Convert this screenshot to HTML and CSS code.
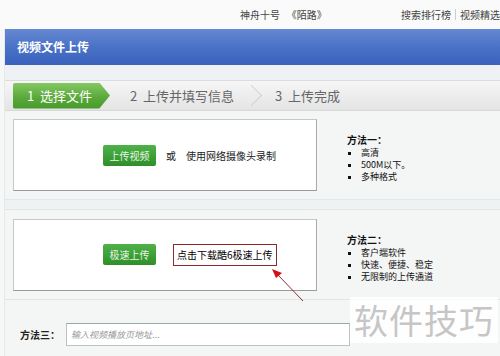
FILE: index.html
```html
<!DOCTYPE html>
<html lang="zh-CN">
<head>
  <meta charset="UTF-8" />
  <title>视频文件上传</title>
  <link rel="stylesheet" href="styles.css">
</head>
<body>
  <div class="topbar">
    <span class="news">神舟十号&nbsp;&nbsp;&nbsp;《陌路》</span>
    <span class="links">搜索排行榜<i class="sep"></i>视频精选</span>
  </div>

  <div class="page">
    <div class="head">视频文件上传</div>
    <div class="strip"></div>

    <div class="steps">
      <div class="step active">1&nbsp;&nbsp;选择文件</div>
      <div class="step">2&nbsp;&nbsp;上传并填写信息</div>
      <div class="chev"></div>
      <div class="step">3&nbsp;&nbsp;上传完成</div>
    </div>

    <div class="section first">
      <div class="box">
        <span class="btn">上传视频</span>
        <span class="or">或</span>
        <span>使用网络摄像头录制</span>
      </div>
      <div class="info">
        <b>方法一：</b>
        <ul>
          <li>高清</li>
          <li>500M以下。</li>
          <li>多种格式</li>
        </ul>
      </div>
    </div>

    <div class="band"></div>

    <div class="section second">
      <div class="box">
        <span class="btn">极速上传</span>
        <span class="tip">点击下载酷6极速上传</span>
        <svg class="arrow" width="40" height="36" viewBox="0 0 40 36">
          <line x1="33" y1="34" x2="7" y2="7" stroke="#8a3030" stroke-width="1"/>
          <polygon points="2,2 12,6 6,11" fill="#d0101a"/>
        </svg>
      </div>
      <div class="info">
        <b>方法二：</b>
        <ul>
          <li>客户端软件</li>
          <li>快速、便捷、稳定</li>
          <li>无限制的上传通道</li>
        </ul>
      </div>
    </div>

    <div class="section third">
      <b>方法三：</b>
      <input class="url" type="text" placeholder="输入视频播放页地址..." />
    </div>
  </div>

  <div class="mark">软件技巧</div>
</body>
</html>
```

FILE: styles.css
```css
body {
  margin: 0;
  background-color: #f6f7f7;
  font-family: "Noto Sans CJK SC", "DejaVu Sans", sans-serif;
  font-size: 11px;
  color: #222;
  width: 500px;
  height: 356px;
  overflow: hidden;
  position: relative;
}
.topbar {
  height: 29px;
  background-color: #fafafa;
  display: flex;
  align-items: center;
  color: #444;
  font-size: 10px;
  white-space: nowrap;
}
.topbar .news {
  margin-left: 240px;
  width: 168px;
}
.topbar .links {
  display: flex;
  align-items: center;
}
.topbar .sep {
  display: inline-block;
  width: 1px;
  height: 11px;
  background-color: #ccc;
  margin: 0 4px;
}
.page {
  margin-left: 4px;
  background-color: #f4f5f5;
  border-left: 1px solid #e6e9e9;
}
.head {
  height: 36px;
  background: linear-gradient(#6688d2, #4a72c7 50%, #3a62bd);
  color: #fff;
  font-weight: bold;
  font-size: 12px;
  line-height: 36px;
  padding-left: 12px;
}
.strip {
  height: 15px;
  background-color: #eef2f4;
}
.steps {
  height: 29px;
  background: linear-gradient(#f6f6f6, #e4e4e4);
  border-top: 1px solid #dcdcdc;
  border-bottom: 1px solid #d8d8d8;
  display: flex;
  align-items: center;
  padding-left: 8px;
  font-size: 13px;
  color: #666;
  white-space: nowrap;
}
.step.active {
  width: 97px;
  height: 26px;
  line-height: 26px;
  box-sizing: border-box;
  padding-left: 14px;
  color: #fff;
  background: linear-gradient(#84c864, #5aaa3b 55%, #469a2c);
  clip-path: polygon(0 0, 89% 0, 100% 50%, 89% 100%, 0 100%);
  border-radius: 2px;
  margin-right: 20px;
}
.chev {
  width: 14px;
  height: 14px;
  border-top: 1px solid #d0d0d0;
  border-right: 1px solid #d0d0d0;
  transform: rotate(45deg);
  margin: 0 16px 0 10px;
}
.section {
  display: flex;
  align-items: center;
  padding-left: 8px;
}
.section.first {
  height: 88px;
}
.section.second {
  height: 89px;
  border-bottom: 1px solid #e2e5e5;
}
.band {
  height: 9px;
  background-color: #eef2f2;
  border-top: 1px solid #e3e6e6;
  border-bottom: 1px solid #e3e6e6;
}
.box {
  width: 304px;
  height: 72px;
  box-sizing: border-box;
  background-color: #fff;
  border: 1px solid #c8c8c8;
  border-right-color: #aaa;
  border-bottom-color: #999;
  display: flex;
  align-items: center;
  padding-left: 89px;
  font-size: 10px;
  position: relative;
  white-space: nowrap;
}
.btn {
  width: 53px;
  height: 21px;
  line-height: 21px;
  text-align: center;
  color: #e8f5e4;
  background: linear-gradient(#4fb248, #2e8f2a);
  border-radius: 2px;
  font-size: 10px;
}
.or {
  margin: 0 10px;
}
.tip {
  margin-left: 17px;
  border: 1px solid #8c2a2a;
  height: 20px;
  line-height: 20px;
  padding: 0 3px;
  color: #000;
}
.arrow {
  position: absolute;
  left: 256px;
  top: 47px;
}
.info {
  margin-left: 30px;
  margin-top: 6px;
  font-size: 9px;
  line-height: 12px;
  color: #111;
  white-space: nowrap;
}
.info b {
  display: block;
  font-size: 10px;
  line-height: 13px;
  margin-bottom: 1px;
}
.info ul {
  margin: 0;
  padding: 0 0 0 14px;
  list-style: square;
}
.section.third {
  height: 58px;
  padding-left: 15px;
  font-size: 10px;
  padding-top: 10px;
  box-sizing: border-box;
}
.url {
  margin-left: 6px;
  width: 284px;
  height: 23px;
  box-sizing: border-box;
  border: 1px solid #b8c4c4;
  border-top-color: #9aa;
  background-color: #fff;
  font-family: "Noto Sans CJK SC", sans-serif;
  font-size: 9px;
  font-style: italic;
  padding-left: 4px;
}
.url::placeholder {
  color: #999;
}
.mark {
  position: absolute;
  left: 350px;
  top: 297px;
  padding: 0 4px;
  font-size: 34px;
  color: #c6c6c6;
  background-color: rgba(255, 255, 255, 0.85);
  letter-spacing: 1px;
  line-height: 46px;
}
```
